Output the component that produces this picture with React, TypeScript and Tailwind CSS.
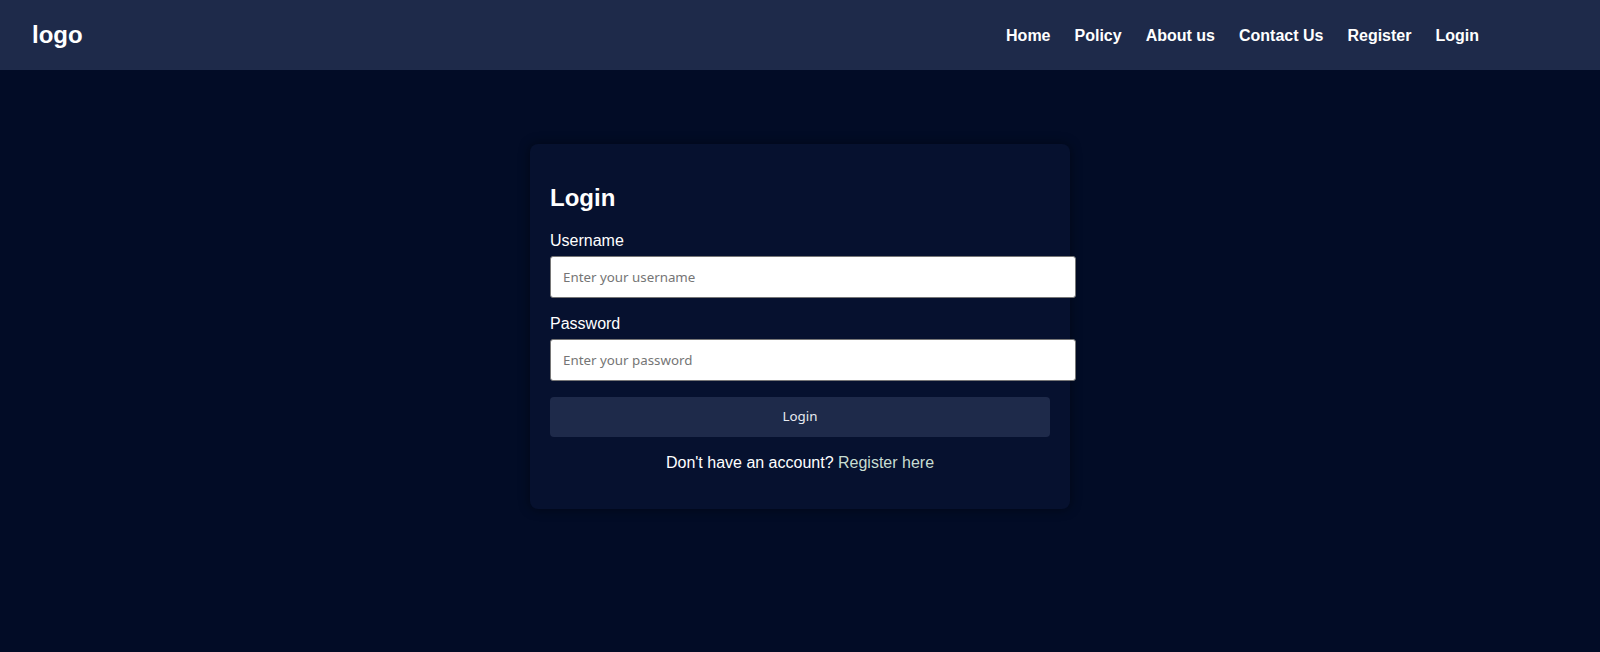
import React, { useState } from "react";

const navLinks = ["Home", "Policy", "About us", "Contact Us", "Register", "Login"];

const Header: React.FC = () => {
  return (
    <header className="flex h-[70px] items-center justify-between bg-[#1e2a4a] pl-8 pr-[121px] font-['Liberation_Sans',Arial,sans-serif] text-white">
      <div className="text-2xl font-bold">logo</div>
      <nav className="pt-[2px]">
        <ul className="flex items-center gap-6 text-base font-bold">
          {navLinks.map((link) => (
            <li key={link}>
              <a href="#" className="text-white">
                {link}
              </a>
            </li>
          ))}
        </ul>
      </nav>
    </header>
  );
};

const LoginForm: React.FC = () => {
  const [username, setUsername] = useState("");
  const [password, setPassword] = useState("");

  const handleSubmit = (e: React.FormEvent) => {
    e.preventDefault();
  };

  return (
    <div className="w-[540px] rounded-lg bg-[#06112f] p-5 shadow-[0_0_12px_rgba(0,0,0,0.45)] font-['Liberation_Sans',Arial,sans-serif] text-white">
      <h2 className="mt-5 mb-5 text-2xl font-bold leading-[normal]">Login</h2>
      <form onSubmit={handleSubmit}>
        <div className="mb-[17px]">
          <label htmlFor="username" className="mb-1.5 block text-base leading-[normal]">
            Username
          </label>
          <input
            id="username"
            type="text"
            value={username}
            onChange={(e) => setUsername(e.target.value)}
            placeholder="Enter your username"
            className="box-border h-[42px] w-[526px] rounded-[3px] border border-[#767676] bg-white px-3 font-sans text-[13.33px] text-black placeholder:text-[#757575]"
          />
        </div>
        <div className="mb-4">
          <label htmlFor="password" className="mb-1.5 block text-base leading-[normal]">
            Password
          </label>
          <input
            id="password"
            type="password"
            value={password}
            onChange={(e) => setPassword(e.target.value)}
            placeholder="Enter your password"
            className="box-border h-[42px] w-[526px] rounded-[3px] border border-[#767676] bg-white px-3 font-sans text-[13.33px] text-black placeholder:text-[#757575]"
          />
        </div>
        <button
          type="submit"
          className="h-10 w-full rounded bg-[#1e2a4a] font-sans text-[13.33px] text-[#e8eaf0]"
        >
          Login
        </button>
      </form>
      <p className="mt-[17px] mb-[17px] text-center text-base leading-[normal]">
        Don't have an account?{" "}
        <a href="#" className="text-[#c8ddd2]">
          Register here
        </a>
      </p>
    </div>
  );
};

export default function App() {
  return (
    <div className="min-h-[652px] bg-[#020c26]">
      <Header />
      <main className="flex justify-center pt-[74px]">
        <LoginForm />
      </main>
    </div>
  );
}
